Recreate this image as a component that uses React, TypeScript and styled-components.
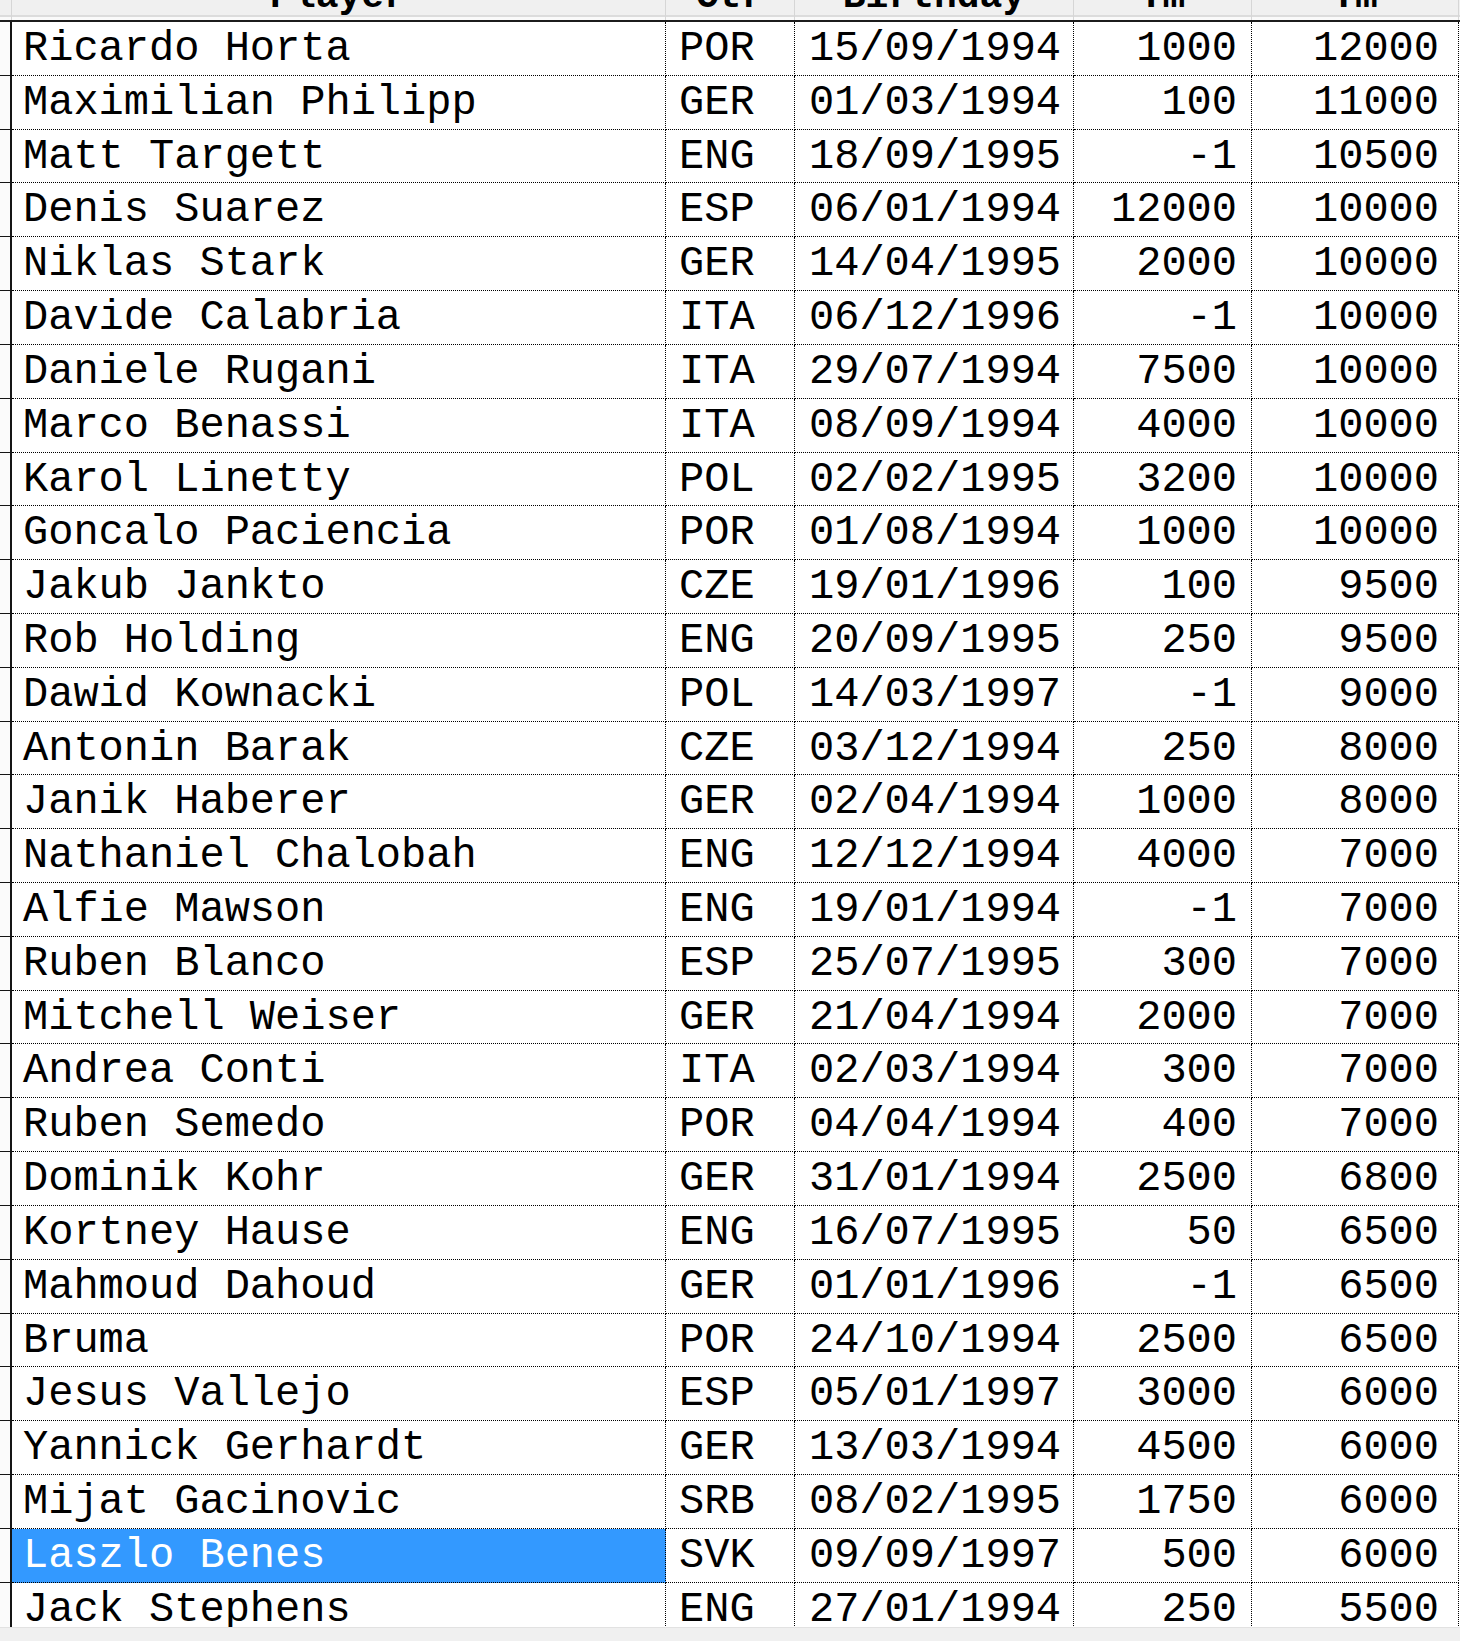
import React from 'react';
import styled, { createGlobalStyle } from 'styled-components';

type Player = [string, string, string, string, string];

const players: Player[] = [
  ['Ricardo Horta', 'POR', '15/09/1994', '1000', '12000'],
  ['Maximilian Philipp', 'GER', '01/03/1994', '100', '11000'],
  ['Matt Targett', 'ENG', '18/09/1995', '-1', '10500'],
  ['Denis Suarez', 'ESP', '06/01/1994', '12000', '10000'],
  ['Niklas Stark', 'GER', '14/04/1995', '2000', '10000'],
  ['Davide Calabria', 'ITA', '06/12/1996', '-1', '10000'],
  ['Daniele Rugani', 'ITA', '29/07/1994', '7500', '10000'],
  ['Marco Benassi', 'ITA', '08/09/1994', '4000', '10000'],
  ['Karol Linetty', 'POL', '02/02/1995', '3200', '10000'],
  ['Goncalo Paciencia', 'POR', '01/08/1994', '1000', '10000'],
  ['Jakub Jankto', 'CZE', '19/01/1996', '100', '9500'],
  ['Rob Holding', 'ENG', '20/09/1995', '250', '9500'],
  ['Dawid Kownacki', 'POL', '14/03/1997', '-1', '9000'],
  ['Antonin Barak', 'CZE', '03/12/1994', '250', '8000'],
  ['Janik Haberer', 'GER', '02/04/1994', '1000', '8000'],
  ['Nathaniel Chalobah', 'ENG', '12/12/1994', '4000', '7000'],
  ['Alfie Mawson', 'ENG', '19/01/1994', '-1', '7000'],
  ['Ruben Blanco', 'ESP', '25/07/1995', '300', '7000'],
  ['Mitchell Weiser', 'GER', '21/04/1994', '2000', '7000'],
  ['Andrea Conti', 'ITA', '02/03/1994', '300', '7000'],
  ['Ruben Semedo', 'POR', '04/04/1994', '400', '7000'],
  ['Dominik Kohr', 'GER', '31/01/1994', '2500', '6800'],
  ['Kortney Hause', 'ENG', '16/07/1995', '50', '6500'],
  ['Mahmoud Dahoud', 'GER', '01/01/1996', '-1', '6500'],
  ['Bruma', 'POR', '24/10/1994', '2500', '6500'],
  ['Jesus Vallejo', 'ESP', '05/01/1997', '3000', '6000'],
  ['Yannick Gerhardt', 'GER', '13/03/1994', '4500', '6000'],
  ['Mijat Gacinovic', 'SRB', '08/02/1995', '1750', '6000'],
  ['Laszlo Benes', 'SVK', '09/09/1997', '500', '6000'],
  ['Jack Stephens', 'ENG', '27/01/1994', '250', '5500'],
];

const selectedIndex = 28;
const columns = '12px 654px 129px 279px 178px 207px';
const headers = ['Player', 'Ctr', 'Birthday', 'Tm', 'Tm'];
const aligns: Array<'left' | 'right'> = ['left', 'left', 'left', 'right', 'right'];
const pads = ['2px 0 0 11px', '2px 0 0 13px', '2px 0 0 14px', '2px 14px 0 0', '2px 19px 0 0'];

const GlobalStyle = createGlobalStyle`
  html, body {
    margin: 0;
    background: #fff;
  }
`;

const Screen = styled.div`
  width: 1460px;
  height: 1641px;
  overflow: hidden;
  display: flex;
  flex-direction: column;
  background: #fff;
  font-family: 'Liberation Mono', 'DejaVu Sans Mono', monospace;
`;

const HeaderRow = styled.div`
  display: grid;
  grid-template-columns: ${columns};
  height: 20px;
  flex: none;
  border-bottom: 2px solid #1c1c1c;
  background: linear-gradient(to bottom, #f0f0f0 0 15px, #dcdcdc 15px 17px, #fafafa 17px 20px);
`;

const HeaderCell = styled.div`
  overflow: hidden;
  text-align: center;
  border-right: 1px solid #d6d6d6;
  box-sizing: border-box;
`;

const HeaderLabel = styled.div`
  font-weight: 700;
  font-size: 38px;
  line-height: 38px;
  margin-top: -22px;
  color: #000;
  white-space: nowrap;
`;

const Body = styled.div`
  flex: 1;
  overflow: hidden;
`;

const Row = styled.div`
  display: grid;
  grid-template-columns: ${columns};
  height: 53.82px;
`;

const Gutter = styled.div`
  box-sizing: border-box;
  background: #fbfbfb;
  border-right: 2px solid #151515;
  border-bottom: 1px solid #151515;
`;

const Cell = styled.div<{ $align: 'left' | 'right'; $pad: string; $selected?: boolean }>`
  box-sizing: border-box;
  border-right: 1px dotted #000;
  border-bottom: 1px dotted #000;
  padding: ${({ $pad }) => $pad};
  text-align: ${({ $align }) => $align};
  font-size: 42px;
  line-height: 50.82px;
  white-space: nowrap;
  overflow: hidden;
  color: ${({ $selected }) => ($selected ? '#fff' : '#000')};
  background: ${({ $selected }) => ($selected ? '#3399ff' : 'transparent')};
`;

const ScrollStrip = styled.div`
  flex: none;
  height: 14px;
  box-sizing: border-box;
  background: #f0f0f0;
  border-top: 1px solid #e2e2e2;
`;

export default function App(): JSX.Element {
  return (
    <>
      <GlobalStyle />
      <Screen>
        <HeaderRow>
          <HeaderCell />
          {headers.map((label, index) => (
            <HeaderCell key={`${index}-head`}>
              <HeaderLabel>{label}</HeaderLabel>
            </HeaderCell>
          ))}
        </HeaderRow>
        <Body>
          {players.map((player, rowIndex) => (
            <Row key={player[0]}>
              <Gutter />
              {player.map((value, colIndex) => (
                <Cell
                  key={`${rowIndex}-${colIndex}`}
                  $align={aligns[colIndex]}
                  $pad={pads[colIndex]}
                  $selected={rowIndex === selectedIndex && colIndex === 0}
                >
                  {value}
                </Cell>
              ))}
            </Row>
          ))}
        </Body>
        <ScrollStrip />
      </Screen>
    </>
  );
}
